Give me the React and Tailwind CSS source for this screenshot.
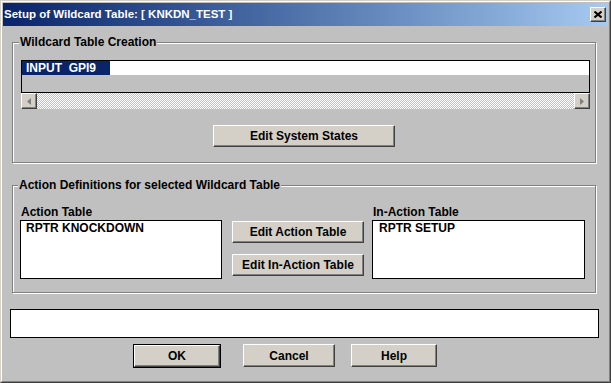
import React from "react";

function Btn({ className = "", children }) {
  return (
    <button className={"h-[22px] bg-[#d4d0c8] border border-t-white border-l-white border-r-[#404040] border-b-[#404040] shadow-[inset_-1px_-1px_0_#808080] text-[12px] font-bold leading-none text-black " + className}>
      {children}
    </button>
  );
}

function Group({ title, className = "", children }) {
  return (
    <fieldset className={"border border-[#808080] shadow-[inset_1px_1px_0_#fff,1px_1px_0_#fff] " + className}>
      <legend className="ml-[-2px] px-[1px] bg-[#c0c0c0] leading-[14px]">{title}</legend>
      {children}
    </fieldset>
  );
}

function ScrollBtn({ dir }) {
  return (
    <div className="w-[16px] h-[16px] shrink-0 bg-[#d4d0c8] border border-t-white border-l-white border-r-[#404040] border-b-[#404040] shadow-[inset_-1px_-1px_0_#808080] flex items-center justify-center">
      <svg width="4" height="7" viewBox="0 0 4 7">
        {dir === "left" ? (
          <path d="M4 0 L0 3.5 L4 7 Z" fill="#808080" />
        ) : (
          <path d="M0 0 L4 3.5 L0 7 Z" fill="#808080" />
        )}
      </svg>
    </div>
  );
}

export default function App() {
  return (
    <div className="w-[611px] h-[383px] bg-[#d4d0c8] font-['Liberation_Sans',Arial,sans-serif] text-[12px] font-bold text-black">
      <div className="w-[611px] h-[383px] border border-t-[#d4d0c8] border-l-[#d4d0c8] border-r-[#404040] border-b-[#404040]">
        <div className="h-full border border-t-white border-l-white border-r-[#808080] border-b-[#808080] bg-[#c0c0c0] p-px flex flex-col">
          {/* title bar */}
          <div className="h-[23px] shrink-0 flex items-center justify-between bg-linear-to-r from-[#0a246a] to-[#a6caf0]">
            <span className="pl-[1px] text-white text-[11.5px] leading-none">Setup of Wildcard Table: [ KNKDN_TEST ]</span>
            <div className="w-[16px] h-[15px] mr-[2px] bg-[#d4d0c8] border border-t-white border-l-white border-r-[#404040] border-b-[#404040] shadow-[inset_-1px_-1px_0_#808080] flex items-center justify-center">
              <svg width="8" height="7" viewBox="0 0 8 7">
                <path d="M0.5 0.5 L7.5 6.5 M7.5 0.5 L0.5 6.5" stroke="#000" strokeWidth="2" />
              </svg>
            </div>
          </div>

          {/* body */}
          <div className="flex-1 flex flex-col pl-[9px]">
            <Group title="Wildcard Table Creation" className="mt-[9px] w-[584px] pl-[8px] pt-[11px] pb-[15px]">
              <div className="w-[569px] h-[33px] border border-black bg-[#c0c0c0]">
                <div className="h-[14px] bg-white flex">
                  <div className="w-[88px] h-[14px] bg-[#0a246a] text-white pl-[4px] leading-[14px] whitespace-pre">INPUT  GPI9</div>
                </div>
              </div>
              <div className="w-[569px] h-[16px] flex">
                <ScrollBtn dir="left" />
                <div className="flex-1 bg-[repeating-conic-gradient(#c0c0c0_0%_25%,#ffffff_0%_50%)] bg-[length:2px_2px]" />
                <ScrollBtn dir="right" />
              </div>
              <div className="flex justify-center mt-[16px] pr-[8px]">
                <Btn className="w-[182px]">Edit System States</Btn>
              </div>
            </Group>

            <Group title="Action Definitions for selected Wildcard Table" className="mt-[15px] w-[584px] pl-[7px] pt-[13px] pb-[13px]">
              <div className="flex items-start">
                <div className="flex flex-col">
                  <div className="pl-[1px] leading-[14px]">Action Table</div>
                  <div className="mt-[1px] w-[202px] h-[59px] bg-white border border-black pl-[5px] leading-[14px]">RPTR KNOCKDOWN</div>
                </div>
                <div className="flex flex-col ml-[10px] mt-[16px] gap-[11px]">
                  <Btn className="w-[132px]">Edit Action Table</Btn>
                  <Btn className="w-[132px]">Edit In-Action Table</Btn>
                </div>
                <div className="flex flex-col ml-[8px]">
                  <div className="pl-[1px] leading-[14px]">In-Action Table</div>
                  <div className="mt-[1px] w-[213px] h-[59px] bg-white border border-black pl-[6px] leading-[14px]">RPTR SETUP</div>
                </div>
              </div>
            </Group>

            <div className="mt-[16px] ml-[-2px] w-[589px] h-[29px] bg-white border border-black" />

            <div className="flex mt-[6px] ml-[121px]">
              <div className="border border-black">
                <Btn className="w-[86px] h-[21px]">OK</Btn>
              </div>
              <Btn className="ml-[22px] w-[92px] h-[23px]">Cancel</Btn>
              <Btn className="ml-[16px] w-[86px] h-[23px]">Help</Btn>
            </div>
          </div>
        </div>
      </div>
    </div>
  );
}
